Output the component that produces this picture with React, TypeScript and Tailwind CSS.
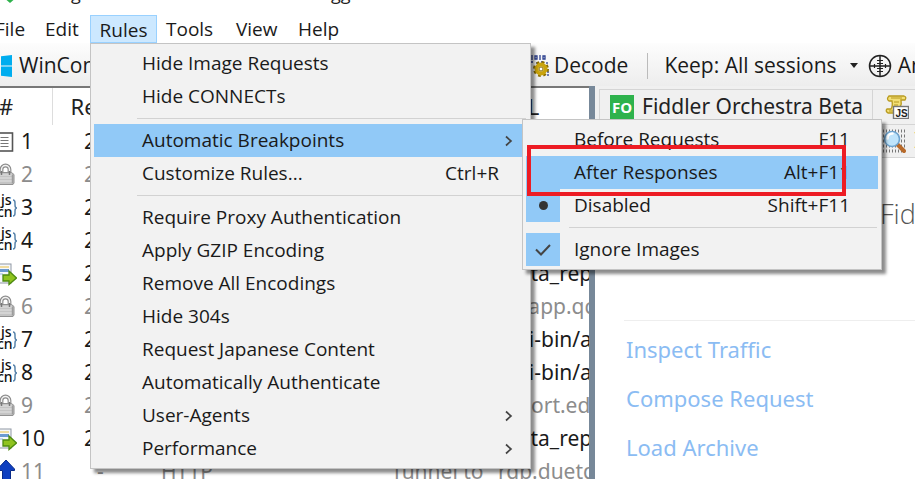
import React from 'react'

type IconKind = 'page' | 'lock' | 'json' | 'post' | 'upload'

const sessions: { id: number; icon: IconKind; result: string; protocol: string; host: string; url: string; muted?: boolean }[] = [
  { id: 1, icon: 'page', result: '200', protocol: '', host: '', url: '' },
  { id: 2, icon: 'lock', result: '200', protocol: '', host: '', url: '', muted: true },
  { id: 3, icon: 'json', result: '200', protocol: '', host: '', url: '' },
  { id: 4, icon: 'json', result: '200', protocol: '', host: '', url: '' },
  { id: 5, icon: 'post', result: '200', protocol: '', host: '', url: '/data_report' },
  { id: 6, icon: 'lock', result: '200', protocol: '', host: '', url: 'myapp.qcloud', muted: true },
  { id: 7, icon: 'json', result: '200', protocol: '', host: '', url: '/cgi-bin/adm' },
  { id: 8, icon: 'json', result: '200', protocol: '', host: '', url: '/cgi-bin/adm' },
  { id: 9, icon: 'lock', result: '200', protocol: '', host: '', url: 'report.edu.cn', muted: true },
  { id: 10, icon: 'post', result: '200', protocol: '', host: '', url: '/data_report' },
  { id: 11, icon: 'upload', result: '-', protocol: 'HTTP', host: 'Tunnel to', url: 'rqp.duetdns', muted: true },
]

const quickLinks = ['Inspect Traffic', 'Compose Request', 'Load Archive']

function SessionIcon({ kind }: { kind: IconKind }) {
  switch (kind) {
    case 'page':
      return (
        <svg width="22" height="24" viewBox="0 0 22 24" className="shrink-0">
          <rect x="0.5" y="3" width="17" height="18" fill="#fff" stroke="#555" strokeWidth="1.6" />
          <path d="M5.500 7.500h8M5.500 10.500h8M5.500 13.500h8M5.500 16.500h8" stroke="#777" strokeWidth="1.200" />
        </svg>
      )
    case 'lock':
      return (
        <svg width="22" height="24" viewBox="0 0 22 24" className="shrink-0">
          <path d="M6.500 12V6.500a4 4 0 0 1 8 0V12" fill="none" stroke="#8c8c8c" strokeWidth="3.800" />
          <path d="M6.500 12V6.500a4 4 0 0 1 8 0V12" fill="none" stroke="#f2f2f2" strokeWidth="1.500" />
          <path d="M2 9.500h14.500l2.500 2V20l-1 1.500H2z" fill="#c4c4c4" stroke="#929292" />
          <path d="M3 12h14M3 15h14M3 18h14" stroke="#e4e4e4" />
          <path d="M17.500 11.500v9" stroke="#9c9c9c" strokeWidth="1.500" />
          <path d="M6.500 8v4M14.500 8v4" stroke="#777" strokeWidth="1.500" />
        </svg>
      )
    case 'json':
      return (
        <svg width="22" height="24" viewBox="0 0 22 24" className="shrink-0 overflow-visible">
          <g fontFamily="Noto Sans, sans-serif" fontSize="14" fontWeight="500" fill="#111">
            <text x="6" y="9">js</text>
            <text x="2" y="21">cn</text>
          </g>
          <path d="M18 4q2 0 2 3v2q0 3 2 3-2 0-2 3v2q0 3-2 3" fill="none" stroke="#5b86ad" strokeWidth="1.500" />
        </svg>
      )
    case 'post':
      return (
        <svg width="22" height="24" viewBox="0 0 22 24" className="shrink-0">
          <rect x="0" y="2" width="16" height="19" fill="#f6f8fb" stroke="#8f98a3" />
          <path d="M0 5h14" stroke="#f0dca0" strokeWidth="2" />
          <path d="M0 8.500h14" stroke="#6d9bd1" strokeWidth="3" />
          <path d="M0 12h8" stroke="#c5d8ee" strokeWidth="2" />
          <path d="M8 13h6V9l7.500 7-7.500 6.500V19H8z" fill="#8fc31f" stroke="#4d8a10" strokeWidth="1.300" />
        </svg>
      )
    default:
      return (
        <svg width="22" height="24" viewBox="0 0 22 24" className="shrink-0">
          <path d="M11 0l8.500 9v1.500h-4V24h-8V10.500h-5V9z" fill="#0f3fc0" stroke="#0a2c8a" />
        </svg>
      )
  }
}

function WindowsLogo() {
  return (
    <svg width="20" height="22" viewBox="0 0 20 22" className="shrink-0">
      <path d="M0 3l8-1.500v9H0zM9 1.300L20 0v10.500H9zM0 11.500h8v9L0 19zM9 11.500h11V22L9 20.700z" fill="#00adef" />
    </svg>
  )
}

function DecodeIcon() {
  return (
    <svg width="24" height="24" viewBox="0 0 24 24" className="shrink-0">
      <g fill="none" stroke="#2b3f8f" strokeWidth="1.300">
        <path d="M1 2h2v3H1zM6 1v5M9 2h2v3H9zM14 1v5M17 2h2v3h-2z" />
        <path d="M2 8v4M5 8h3M11 8v3M15 8h3M21 8v4M1 14h3v3H1zM2 19v4M22 17v5" strokeDasharray="2 1" />
      </g>
      <circle cx="15" cy="15" r="6.500" fill="none" stroke="#8a6d00" strokeWidth="3" strokeDasharray="2.600 2.500" />
      <circle cx="15" cy="15" r="4.500" fill="none" stroke="#c9a30c" strokeWidth="4" />
      <circle cx="15" cy="15" r="2" fill="#fff" stroke="#8a6d00" />
    </svg>
  )
}

function TargetIcon() {
  return (
    <svg width="24" height="24" viewBox="0 0 24 24" fill="none" stroke="#222" strokeWidth="1.500" className="shrink-0">
      <circle cx="12" cy="12" r="10.500" />
      <path d="M12 1v22M1 12h22" />
      <path d="M9 6.500h6M9 9.500h6M9 14.500h6M9 17.500h6M6.500 10v4M17.500 10v4" strokeWidth="1.200" />
    </svg>
  )
}

function ScriptIcon() {
  return (
    <svg width="24" height="24" viewBox="0 0 24 24" className="shrink-0">
      <path d="M4 1h15q3 1 1 4h-4q1 4-1 8l-2 5H3q-3-2-1-4h4q2-3 1-8H4Q1 4 4 1z" fill="#f3df74" stroke="#b89a20" strokeWidth="1.300" />
      <path d="M6 3h11M9 7h5M9 10h4M4 16h6" stroke="#b89a20" strokeWidth="1.200" />
      <rect x="8.500" y="11.500" width="15" height="12" fill="#fff" stroke="#777" strokeWidth="1.400" />
      <text x="10.500" y="21.500" fontFamily="Liberation Sans, sans-serif" fontWeight="700" fontSize="10" fill="#222">JS</text>
    </svg>
  )
}

function InspectIcon() {
  return (
    <svg width="24" height="24" viewBox="0 0 24 24" className="shrink-0">
      <path d="M1 2h22M1 7h22M1 12h22M1 17h22M1 22h22" stroke="#777" strokeWidth="3" strokeDasharray="1 2" />
      <path d="M15 15l7 7" stroke="#b86a2a" strokeWidth="4" strokeLinecap="round" />
      <circle cx="10" cy="10" r="7.500" fill="#bfe4fb" stroke="#6ea4cf" strokeWidth="1.600" />
      <path d="M5.500 9.500a5 5 0 0 1 5-5" fill="none" stroke="#fff" strokeWidth="2.500" strokeLinecap="round" />
    </svg>
  )
}

function Arrow() {
  return (
    <svg width="8" height="12" viewBox="0 0 8 12" fill="none" stroke="#444" strokeWidth="1.700">
      <path d="M1 1.500l5 4.500-5 4.500" />
    </svg>
  )
}

function MenuSeparator() {
  return (
    <li role="separator" className="flex h-[11px] items-center pr-px pl-[43px]">
      <span className="h-px flex-1 bg-[#d2d2d2]" />
    </li>
  )
}

type MenuItemProps = {
  label: string
  shortcut?: string
  active?: boolean
  arrow?: boolean
  mark?: 'dot' | 'check'
  children?: React.ReactNode
}

function MenuItem({ label, shortcut, active, arrow, mark, children }: MenuItemProps) {
  return (
    <li className="relative">
      <button type="button" className={`flex h-[33px] w-full items-center text-left ${active ? 'bg-[#91c9f7]' : ''}`}>
        <span className={`flex h-full w-[34px] items-center justify-center ${mark ? 'bg-[#91c9f7]' : ''}`}>
          {mark === 'dot' && <span className="size-[9px] rounded-full bg-[#333]" />}
          {mark === 'check' && (
            <svg width="16" height="12" viewBox="0 0 16 12" fill="none" stroke="#444" strokeWidth="2">
              <path d="M1 5.500l5 5L15 1" />
            </svg>
          )}
        </span>
        <span className="flex-1 pl-[14px] whitespace-nowrap">{label}</span>
        {shortcut && <span className="pr-7">{shortcut}</span>}
        {arrow && <span className="pr-[14px]"><Arrow /></span>}
      </button>
      {children}
    </li>
  )
}

const menuPanel = 'absolute border border-[#c4c4c4] bg-[#f2f2f2] p-[3px] shadow-[4px_4px_3px_rgba(0,0,0,0.45)]'

function BreakpointsMenu() {
  return (
    <ul className={`${menuPanel} -top-[5px] left-full -ml-[5px] w-[360px]`}>
      <MenuItem label="Before Requests" shortcut="F11" />
      <MenuItem label="After Responses" shortcut="Alt+F11" active />
      <MenuItem label="Disabled" shortcut="Shift+F11" mark="dot" />
      <MenuSeparator />
      <MenuItem label="Ignore Images" mark="check" />
      {/* Highlight around the chosen entry */}
      <li aria-hidden="true" className="pointer-events-none absolute top-[25px] left-[4px] h-[51px] w-[319px] border-4 border-[#ed1c24]" />
    </ul>
  )
}

function RulesMenu() {
  return (
    <ul className={`${menuPanel} top-full left-0 z-10 w-[441px]`}>
      <MenuItem label="Hide Image Requests" />
      <MenuItem label="Hide CONNECTs" />
      <MenuSeparator />
      <MenuItem label="Automatic Breakpoints" active arrow>
        <BreakpointsMenu />
      </MenuItem>
      <MenuItem label="Customize Rules..." shortcut="Ctrl+R" />
      <MenuSeparator />
      <MenuItem label="Require Proxy Authentication" />
      <MenuItem label="Apply GZIP Encoding" />
      <MenuItem label="Remove All Encodings" />
      <MenuItem label="Hide 304s" />
      <MenuItem label="Request Japanese Content" />
      <MenuItem label="Automatically Authenticate" />
      <MenuItem label="User-Agents" arrow />
      <MenuItem label="Performance" arrow />
    </ul>
  )
}

function MenuBar() {
  return (
    <nav className="flex h-[28px] font-['Open_Sans',sans-serif] text-[19px] text-[#1a1a1a]">
      <button type="button" className="w-[44px] pl-[3px] text-left">File</button>
      <button type="button" className="w-[54px] pl-[9px] text-left">Edit</button>
      <div className="relative">
        <button type="button" className="h-full w-[67px] border border-[#99d1ff] bg-[#cce8ff]">Rules</button>
        <RulesMenu />
      </div>
      <button type="button" className="w-[70px] pl-[9px] text-left">Tools</button>
      <button type="button" className="w-[62px] pl-[9px] text-left">View</button>
      <button type="button" className="px-[9px]">Help</button>
    </nav>
  )
}

function Toolbar() {
  return (
    <div className="flex h-[43px] items-center bg-linear-to-b from-[#fdfdfd] to-[#ededed] pt-[2px] font-['Open_Sans',sans-serif] text-[21px] whitespace-nowrap text-[#1a1a1a]">
      <button type="button" className="flex w-[534px] shrink-0 items-center gap-[7px]">
        <WindowsLogo />
        WinConfig
      </button>
      <button type="button" className="flex shrink-0 items-center gap-1">
        <DecodeIcon />
        Decode
      </button>
      <span className="mr-4 ml-[19px] h-[26px] w-px shrink-0 bg-[#bbb]" />
      <button type="button" className="flex shrink-0 items-center gap-3">
        Keep: All sessions
        <svg width="10" height="6" viewBox="0 0 10 6"><path d="M1 0h8L5 5z" fill="#222" /></svg>
      </button>
      <button type="button" className="ml-[9px] flex shrink-0 items-center gap-[6px]">
        <TargetIcon />
        Any Process
      </button>
    </div>
  )
}

function SessionList() {
  return (
    <div className="w-[597px] shrink-0 overflow-hidden border-t-2 border-[#777] bg-white">
      <table className="w-full table-fixed border-collapse text-left whitespace-nowrap">
        <colgroup>
          <col className="w-[60px]" />
          <col className="w-[94px]" />
          <col className="w-[235px]" />
          <col className="w-[111px]" />
          <col />
        </colgroup>
        <thead>
          <tr className="h-[37px] text-[22px] text-[#222]">
            <th className="border-r border-[#ddd] pl-[7px] font-normal">#</th>
            <th className="pl-[18px] font-normal">Result</th>
            <th className="pl-[15px] font-normal">Protocol</th>
            <th className="pl-[10px] font-normal">Host</th>
            <th className="pl-[6px] font-normal">URL</th>
          </tr>
        </thead>
        <tbody>
          {sessions.map((s) => (
            <tr key={s.id} className={`h-[33px] text-[21px] leading-[33px] ${s.muted ? 'text-[#8c8c8c]' : 'text-[#1a1a1a]'}`}>
              <td className="pl-[3px]">
                <div className="flex items-center gap-1">
                  <SessionIcon kind={s.icon} />
                  {s.id}
                </div>
              </td>
              <td className={s.result === '-' ? 'pl-[45px]' : 'pl-8'}>{s.result}</td>
              <td className="pl-[15px]">{s.protocol}</td>
              <td className="pl-[10px]">{s.host}</td>
              <td className="overflow-hidden pl-[6px]">{s.url}</td>
            </tr>
          ))}
        </tbody>
      </table>
    </div>
  )
}

function SidePanel() {
  return (
    <section className="flex min-w-0 flex-1 flex-col overflow-hidden bg-[#f0f0f0] pt-[3px] whitespace-nowrap">
      <div className="ml-1 flex h-[35px] border-t border-l border-[#d5d5d5] text-[21px] text-[#222]">
        <button type="button" className="flex w-[273px] shrink-0 items-center gap-2 border-r border-[#d5d5d5] pl-[10px]">
          <span className="flex size-6 items-center justify-center bg-[#2eb24c] font-['Open_Sans',sans-serif] text-[15px] font-bold text-white">FO</span>
          Fiddler Orchestra Beta
        </button>
        <button type="button" className="flex shrink-0 items-center gap-2 pl-3">
          <ScriptIcon />
          FiddlerScript
        </button>
      </div>
      <div className="ml-1 flex h-[34px] items-center border-y border-[#d5d5d5] pl-[283px] text-[21px] text-[#222]">
        <button type="button" className="flex shrink-0 items-center gap-2">
          <InspectIcon />
          <span className="text-[#f0a030]">Inspectors</span>
        </button>
      </div>
      <div className="flex-1 bg-white pl-[29px] text-[#8bbcf3]">
        <h1 className="h-[163px] border-b border-[#eee] pt-[36px] pl-[256px] font-['Open_Sans',sans-serif] text-[27px] font-light text-[#555]">Fiddler</h1>
        <ul className="flex flex-col pt-[4px] pl-[2px] text-[22px] leading-[49px]">
          {quickLinks.map((link) => (
            <li key={link}>
              <a href="#">{link}</a>
            </li>
          ))}
        </ul>
      </div>
    </section>
  )
}

export default function App() {
  return (
    <div className="h-screen overflow-hidden bg-white">
      <div className="-ml-2 flex h-full flex-col font-['Noto_Sans',sans-serif]">
        {/* Title bar */}
        <header className="flex h-[15px] items-end gap-[25px] overflow-hidden pb-[12px] pl-[11px] font-['Open_Sans',sans-serif] text-[18px] leading-5 whitespace-nowrap text-[#222]">
          <svg width="14" height="14" viewBox="0 0 14 14" className="shrink-0">
            <path d="M7 0l7 8-7 6-7-6z" fill="#2eb24c" />
          </svg>
          <span>Progress Telerik Fiddler Web Debugger</span>
        </header>
        <MenuBar />
        <Toolbar />
        <div className="flex min-h-0 flex-1">
          <SessionList />
          <div className="w-[6px] shrink-0 bg-[#778899]" />
          <SidePanel />
        </div>
      </div>
    </div>
  )
}
